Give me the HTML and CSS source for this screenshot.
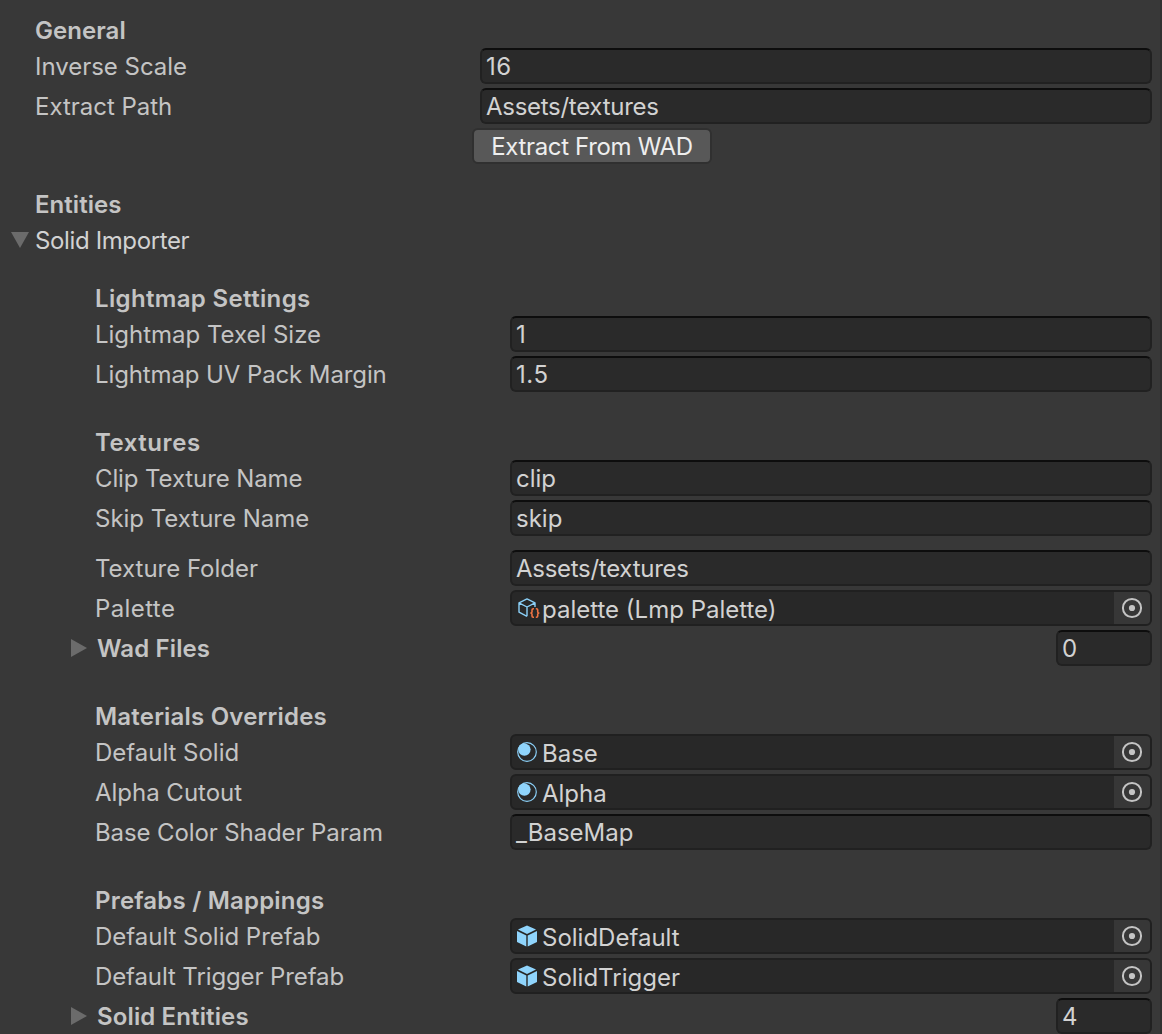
FILE: index.html
```html
<!DOCTYPE html>
<html lang="en">
<head>
<meta charset="utf-8">
<title>Importer Settings</title>
<link rel="stylesheet" href="styles.css">
</head>
<body>
<svg class="defs" aria-hidden="true">
  <symbol id="picker" viewBox="0 0 22 22"><circle cx="11" cy="11" r="9.1" fill="none" stroke="#c4c4c4" stroke-width="2"/><circle cx="11" cy="11" r="3.1" fill="#c4c4c4"/></symbol>
  <symbol id="material" viewBox="0 0 20 20"><circle cx="10" cy="10" r="9.3" fill="none" stroke="#8bd0f8" stroke-width="1.2"/><circle cx="7.4" cy="7.6" r="6.2" fill="#8fd4fc"/></symbol>
  <symbol id="prefab" viewBox="0 0 20 22"><path fill="#8fd4fc" d="M10 .5 19 4.6 10 9 1 4.6ZM0 6 9.3 10.6V21.4L0 17ZM20 6V17L10.7 21.4V10.6Z"/></symbol>
  <symbol id="asset" viewBox="0 0 22 20"><path fill="none" stroke="#8bd0f8" stroke-width="1.4" stroke-linejoin="round" d="M9 18.3 1 14.2V4.8L9 .9 17 4.8V9M1 4.8l8 4.2L17 4.8M9 9V18.3"/><g fill="none" stroke="#f07443" stroke-width="1.6"><path d="M16 10.8H15.2Q14 10.8 14 12V13.9Q14 15 12.3 15 14 15 14 16.1V18Q14 19.2 15.2 19.2H16"/><path d="M17.8 10.8H18.5Q19.7 10.8 19.7 12V13.9Q19.7 15 21.4 15 19.7 15 19.7 16.1V18Q19.7 19.2 18.5 19.2H17.8"/></g></symbol>
</svg>
<main class="inspector">
  <section class="group general">
    <h2 class="heading snug">General</h2>
    <div class="row"><label class="label">Inverse Scale</label><div class="input number">16</div></div>
    <div class="row"><label class="label">Extract Path</label><div class="input path">Assets/textures</div></div>
    <div class="row actions"><button class="button">Extract From WAD</button></div>
  </section>
  <section class="group entities">
    <h2 class="heading snug">Entities</h2>
    <div class="row foldout open"><svg class="arrow" viewBox="0 0 18 16"><path d="M0 0H18L9 16Z"/></svg><span class="title">Solid Importer</span></div>
  </section>
  <div class="nested">
    <section class="group">
      <h2 class="heading">Lightmap Settings</h2>
      <div class="row"><label class="label">Lightmap Texel Size</label><div class="input number">1</div></div>
      <div class="row"><label class="label tight">Lightmap UV Pack Margin</label><div class="input number">1.5</div></div>
    </section>
    <section class="group">
      <h2 class="heading loose">Textures</h2>
      <div class="row"><label class="label tight">Clip Texture Name</label><div class="input">clip</div></div>
      <div class="row"><label class="label">Skip Texture Name</label><div class="input">skip</div></div>
      <div class="row spaced"><label class="label">Texture Folder</label><div class="input path">Assets/textures</div></div>
      <div class="row"><label class="label loose">Palette</label><div class="object"><svg class="icon asset"><use href="#asset"/></svg><span class="name">palette (Lmp Palette)</span><span class="pick"><svg><use href="#picker"/></svg></span></div></div>
      <div class="row foldout"><svg class="arrow" viewBox="0 0 16 18"><path d="M0 0V18L16 9Z"/></svg><span class="title">Wad Files</span><div class="input size">0</div></div>
    </section>
    <section class="group">
      <h2 class="heading medium">Materials Overrides</h2>
      <div class="row"><label class="label">Default Solid</label><div class="object"><svg class="icon material"><use href="#material"/></svg><span class="name">Base</span><span class="pick"><svg><use href="#picker"/></svg></span></div></div>
      <div class="row"><label class="label">Alpha Cutout</label><div class="object"><svg class="icon material"><use href="#material"/></svg><span class="name">Alpha</span><span class="pick"><svg><use href="#picker"/></svg></span></div></div>
      <div class="row"><label class="label tight">Base Color Shader Param</label><div class="input">_BaseMap</div></div>
    </section>
    <section class="group">
      <h2 class="heading medium">Prefabs / Mappings</h2>
      <div class="row"><label class="label">Default Solid Prefab</label><div class="object"><svg class="icon prefab"><use href="#prefab"/></svg><span class="name">SolidDefault</span><span class="pick"><svg><use href="#picker"/></svg></span></div></div>
      <div class="row"><label class="label tight">Default Trigger Prefab</label><div class="object"><svg class="icon prefab"><use href="#prefab"/></svg><span class="name">SolidTrigger</span><span class="pick"><svg><use href="#picker"/></svg></span></div></div>
      <div class="row foldout"><svg class="arrow" viewBox="0 0 16 18"><path d="M0 0V18L16 9Z"/></svg><span class="title">Solid Entities</span><div class="input size">4</div></div>
    </section>
  </div>
</main>
</body>
</html>
```
FILE: styles.css
```css
* { box-sizing: border-box; }
body {
  margin: 0;
  background: #383838;
  color: #c4c4c4;
  font: 400 24px/36px Inter, "Liberation Sans", sans-serif;
}
.defs { display: none; }
.inspector {
  height: 1034px;
  padding: 12px 8px 0 35px;
  border-right: 2px solid #313131;
  overflow: hidden;
}
.heading {
  margin: 0;
  height: 36px;
  font-size: 24px;
  font-weight: 600;
  line-height: 37px;
  letter-spacing: 0.35px;
}
.heading.snug { letter-spacing: 0.05px; }
.heading.medium { letter-spacing: 0.2px; }
.heading.loose { letter-spacing: 0.55px; }
.group { margin-bottom: 32px; }
.group.general { margin-bottom: 22px; }
.group.entities { margin-bottom: 22px; }
.nested .group:last-child { margin-bottom: 0; }
.group > .row + .row { margin-top: 4px; }
.row {
  display: flex;
  align-items: center;
  height: 36px;
  white-space: nowrap;
}
.group > .row.spaced { margin-top: 14px; }
.label { flex: 0 0 445px; line-height: 37px; letter-spacing: -0.02px; }
.label.tight { letter-spacing: -0.11px; }
.label.loose { letter-spacing: 0.4px; }
.nested { padding-left: 60px; }
.nested .label { flex-basis: 415px; }
.input {
  flex: 1;
  height: 36px;
  padding-left: 4px;
  border: 2px solid #212121;
  border-top-color: #0d0d0d;
  border-radius: 6px;
  background: #2a2a2a;
  color: #d2d2d2;
  line-height: 33px;
}
.input.number { letter-spacing: 0.6px; }
.input.path { letter-spacing: -0.28px; }
.group > .actions { padding-left: 437px; }
.button {
  width: 240px;
  height: 36px;
  padding: 0;
  border: 2px solid #303030;
  border-radius: 6px;
  background: #585858;
  color: #eee;
  font: inherit;
  line-height: 33px;
  letter-spacing: -0.34px;
}
.foldout .arrow { flex: none; fill: #6b6b6b; }
.foldout .title { flex: 1; line-height: 37px; }
.foldout.open { color: #d2d2d2; margin-left: -24px; }
.open .arrow { width: 18px; height: 16px; margin-right: 6px; }
.open .title { letter-spacing: -0.37px; }
.nested .foldout { margin-left: -24px; }
.nested .arrow { width: 16px; height: 18px; margin-right: 10px; }
.nested .title { font-weight: 600; letter-spacing: 0.13px; }
.input.size { flex: 0 0 96px; }
.object {
  flex: 1;
  display: flex;
  align-items: center;
  height: 36px;
  border: 2px solid #202020;
  border-radius: 6px;
  background: #282828;
  color: #d2d2d2;
  overflow: hidden;
}
.icon { flex: none; margin-left: 5px; }
.material { width: 20px; height: 20px; margin-right: 5px; }
.prefab { width: 20px; height: 22px; margin-right: 5px; }
.asset { width: 22px; height: 20px; margin: 0 2px 0 6px; }
.name { flex: 1; padding-top: 3px; line-height: 34px; }
.pick {
  flex: 0 0 36px;
  display: flex;
  align-items: center;
  justify-content: center;
  height: 32px;
  background: #373737;
}
.pick svg { width: 22px; height: 22px; }
```
